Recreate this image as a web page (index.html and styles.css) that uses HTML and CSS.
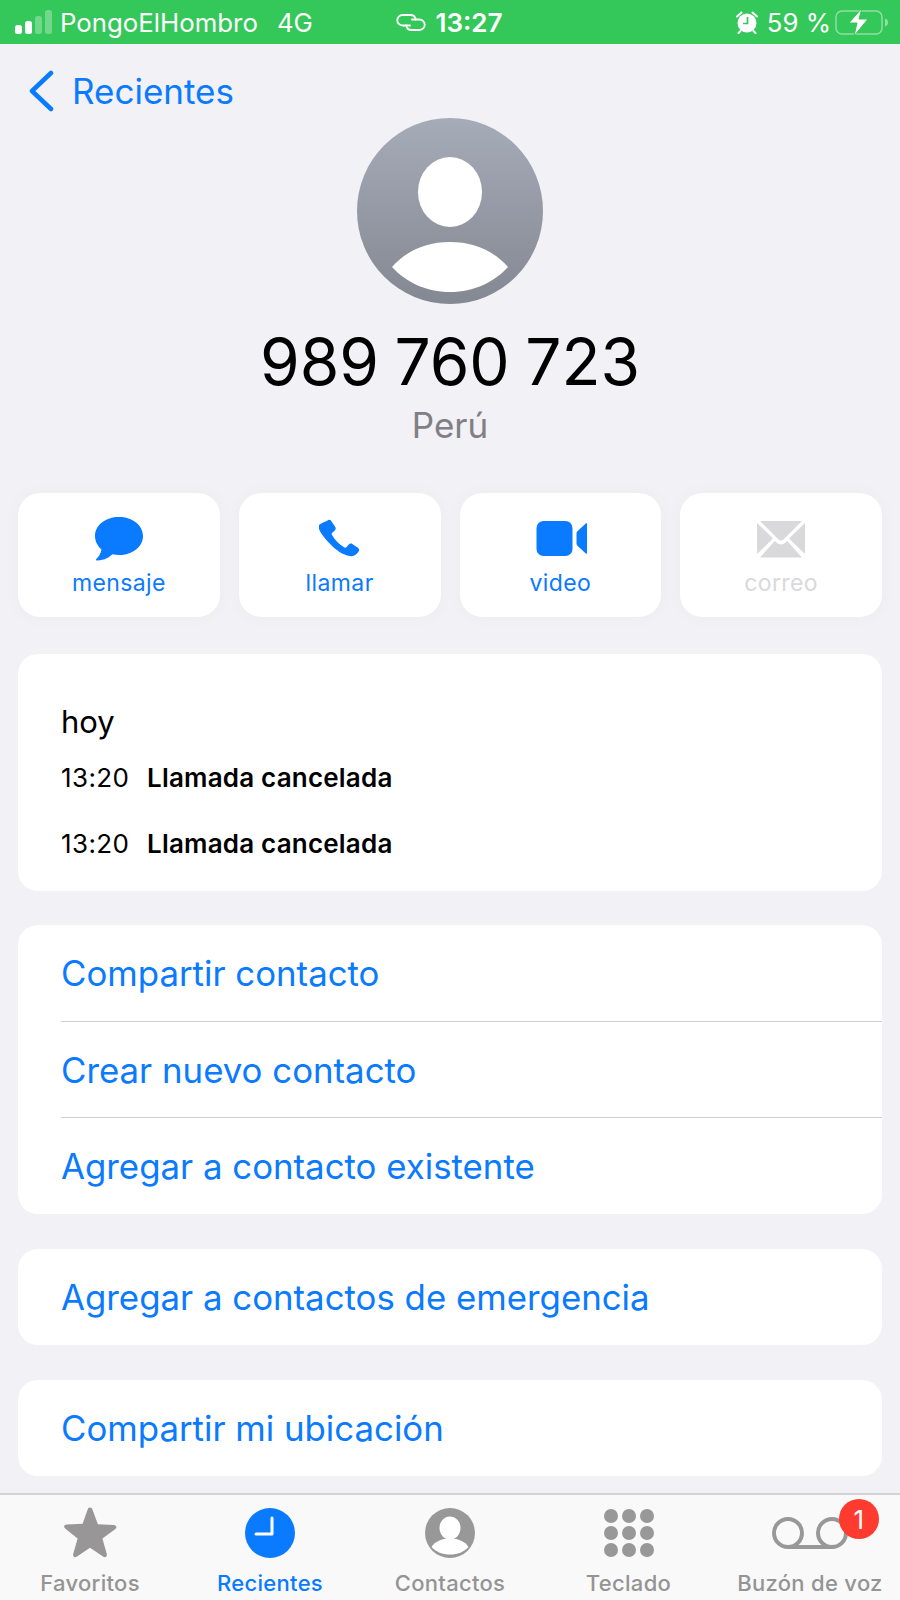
FILE: index.html
```html
<!DOCTYPE html>
<html lang="es">
<head>
  <meta charset="UTF-8">
  <meta name="viewport" content="width=device-width, initial-scale=1.0">
  <title>989 760 723</title>
  <link rel="stylesheet" href="styles.css">
</head>
<body>
  <div class="status-bar">
    <div class="status-left">
      <svg class="signal" width="38" height="24" viewBox="0 0 38 24">
        <rect x="0" y="15" width="7" height="9" rx="2.5" fill="#fff"/>
        <rect x="10" y="11" width="7" height="13" rx="2.5" fill="#fff"/>
        <rect x="20" y="6" width="7" height="18" rx="2.5" fill="#fff" opacity=".3"/>
        <rect x="30" y="0" width="7" height="24" rx="2.5" fill="#fff" opacity=".3"/>
      </svg>
      <span class="carrier">PongoElHombro</span>
      <span class="network">4G</span>
    </div>
    <div class="status-center">
      <svg width="30" height="17" viewBox="0 0 30 17" fill="none" stroke="#fff" stroke-width="1.8" stroke-linecap="round">
        <path d="M14 11.500H6.500a5.250 5.250 0 0 1 0-10.500h8a5.250 5.250 0 0 1 5.200 4.500"/>
        <path d="M16 5.500h7.500a5.250 5.250 0 0 1 0 10.500h-8a5.250 5.250 0 0 1-5.200-4.500"/>
      </svg>
      <span class="clock">13:27</span>
    </div>
    <div class="status-right">
      <svg width="22" height="24" viewBox="0 0 22 24">
        <circle cx="11" cy="13" r="9.500" fill="#fff"/>
        <path d="M1 6.500 5.500 2.500M21 6.500 16.500 2.500M4.500 21l-2 2M17.500 21l2 2" stroke="#fff" stroke-width="2" stroke-linecap="round"/>
        <path d="M11.500 7v6.500H7" fill="none" stroke="#34c759" stroke-width="1.700"/>
      </svg>
      <span class="battery-pct">59 %</span>
      <svg width="54" height="28" viewBox="0 0 54 28">
        <rect x="1" y="3" width="46" height="23" rx="6" fill="none" stroke="#fff" stroke-opacity=".45" stroke-width="1.500"/>
        <path d="M50 10.500c2 .5 3 2 3 4s-1 3.500-3 4z" fill="#fff" fill-opacity=".45"/>
        <path d="M27 0 14 15h8l-3 13 14-17h-9z" fill="#fff" stroke="#34c759" stroke-width="1"/>
      </svg>
    </div>
  </div>

  <nav class="back-bar">
    <svg width="26" height="42" viewBox="0 0 26 42" fill="none" stroke="#0a7aff" stroke-width="4.500" stroke-linecap="round" stroke-linejoin="round">
      <path d="M23 3 4 21l19 18"/>
    </svg>
    <span>Recientes</span>
  </nav>

  <section class="profile">
    <svg class="avatar" width="186" height="186" viewBox="0 0 186 186">
      <defs>
        <linearGradient id="avatarFill" x1="0" y1="0" x2="0" y2="1">
          <stop offset="0" stop-color="#a6abb8"/>
          <stop offset="1" stop-color="#848892"/>
        </linearGradient>
      </defs>
      <circle cx="93" cy="93" r="93" fill="url(#avatarFill)"/>
      <ellipse cx="93" cy="74" rx="32" ry="35" fill="#fff"/>
      <path d="M35 149C50 132 70 124 93 124s43 8 58 25c-14 15-34 25-58 25s-44-10-58-25z" fill="#fff"/>
    </svg>
    <h1 class="phone-number">989 760 723</h1>
    <p class="country">Perú</p>
  </section>

  <div class="actions">
    <a class="action">
      <svg width="50" height="46" viewBox="0 0 50 46">
        <path d="M25 1c13.500 0 24 8.200 24 19s-10.500 19-24 19c-2.300 0-4.500-.2-6.500-.7C15.500 41 11 44.500 3 44.500c-1 0-1.300-1-.7-1.600 2.700-2.500 4.500-5.400 5.200-9.400C3.700 30 1 25.300 1 20 1 9.200 11.500 1 25 1z" fill="#0a7aff"/>
      </svg>
      <span>mensaje</span>
    </a>
    <a class="action">
      <svg width="42" height="42" viewBox="2 0 44 44">
        <path d="M11 2.500c1.500-1 3-.6 4 .8l4 6c.9 1.400.6 2.800-.5 3.900l-2.800 2.400c-.6.600-.6 1.200-.2 2 1.500 2.700 3.400 5.200 5.700 7.500 2.300 2.300 4.700 4.200 7.400 5.700.8.400 1.400.4 2-.2l2.400-2.700c1.100-1.200 2.500-1.500 3.900-.6l5.800 3.900c1.400 1 1.800 2.500.8 4-1.700 2.600-4.300 4.800-7.500 4.800-5.500 0-13.500-3.800-20.800-11.100C7.900 21.600 1 13.200 1.500 8.500 1.800 6 8.500 4 11 2.500z" fill="#0a7aff"/>
      </svg>
      <span>llamar</span>
    </a>
    <a class="action">
      <svg width="54" height="36" viewBox="-3.500 0 54 36">
        <rect x="0" y="0" width="36" height="35" rx="7" fill="#0a7aff"/>
        <path d="M40 12.500c0-1 .4-1.700 1.200-2.400l7.800-7.400c1.300-1 3.300-.3 3.300 1.500v26.600c0 1.800-2 2.500-3.300 1.500l-7.800-7.400c-.8-.7-1.200-1.400-1.200-2.400z" fill="#0a7aff"/>
      </svg>
      <span>video</span>
    </a>
    <a class="action is-disabled">
      <svg width="48" height="38" viewBox="0 0 48 38">
        <path d="M3 1h42L26.500 19.500c-1.400 1.200-3.600 1.200-5 0z" fill="#d9d9db"/>
        <path d="M0 3v31l16-15.500zM48 3v31L32 18.500z" fill="#d9d9db"/>
        <path d="M3 37.500 17.800 21l2.200 2c2.300 1.900 5.700 1.900 8 0l2.200-2L45 37.500z" fill="#d9d9db"/>
      </svg>
      <span>correo</span>
    </a>
  </div>

  <section class="card history">
    <div class="history-day">hoy</div>
    <div class="history-row"><span class="history-time">13:20</span><strong>Llamada cancelada</strong></div>
    <div class="history-row"><span class="history-time">13:20</span><strong>Llamada cancelada</strong></div>
  </section>

  <ul class="card link-list first-list">
    <li>Compartir contacto</li>
    <li>Crear nuevo contacto</li>
    <li>Agregar a contacto existente</li>
  </ul>

  <ul class="card link-list">
    <li>Agregar a contactos de emergencia</li>
  </ul>

  <ul class="card link-list">
    <li>Compartir mi ubicación</li>
  </ul>

  <footer class="tab-bar">
    <a class="tab">
      <svg width="56" height="54" viewBox="0 0 56 54">
        <path d="M28 1.500c1.300 0 2 .8 2.500 2.200l5.400 14.500 15.700.7c3 .1 3.800 2.500 1.500 4.300L40.400 32.600l4.300 15.200c.8 2.800-1.300 4.300-3.700 2.700L28 41.800l-13 8.700c-2.400 1.600-4.500.1-3.700-2.700l4.300-15.200L3.400 22.700c-2.300-1.800-1.500-4.200 1.500-4.300l15.700-.7 5-14c.5-1.400 1.100-2.200 2.400-2.200z" fill="#989696"/>
      </svg>
      <span>Favoritos</span>
    </a>
    <a class="tab is-active">
      <svg width="54" height="54" viewBox="0 0 54 54">
        <circle cx="27" cy="27" r="25" fill="#0a7aff"/>
        <path d="M29 12v16H13" fill="none" stroke="#fff" stroke-width="3" stroke-linecap="round" stroke-linejoin="round"/>
      </svg>
      <span>Recientes</span>
    </a>
    <a class="tab">
      <svg width="54" height="54" viewBox="0 0 54 54">
        <circle cx="27" cy="27" r="25" fill="#989898"/>
        <ellipse cx="27" cy="22" rx="10.500" ry="11.500" fill="#fff"/>
        <path d="M8.500 41c3.500-5.500 10-8.500 18.500-8.500S42 35.500 45.500 41C41 46 34.500 48.500 27 48.500S13 46 8.500 41z" fill="#fff"/>
      </svg>
      <span>Contactos</span>
    </a>
    <a class="tab tab-keypad">
      <svg width="54" height="54" viewBox="0 0 54 54" fill="#989898">
        <circle cx="9" cy="10" r="7"/><circle cx="27" cy="10" r="7"/><circle cx="45" cy="10" r="7"/>
        <circle cx="9" cy="27" r="7"/><circle cx="27" cy="27" r="7"/><circle cx="45" cy="27" r="7"/>
        <circle cx="9" cy="44" r="7"/><circle cx="27" cy="44" r="7"/><circle cx="45" cy="44" r="7"/>
      </svg>
      <span>Teclado</span>
    </a>
    <a class="tab">
      <span class="tab-icon">
        <svg width="76" height="54" viewBox="0 0 76 54" fill="none" stroke="#989898" stroke-width="4">
          <circle cx="16" cy="27" r="14"/>
          <circle cx="60" cy="27" r="14"/>
          <path d="M16 41h44"/>
        </svg>
        <b class="badge">1</b>
      </span>
      <span>Buzón de voz</span>
    </a>
  </footer>
</body>
</html>
```

FILE: styles.css
```css
* {
  box-sizing: border-box;
}

body {
  margin: 0;
  width: 900px;
  height: 1600px;
  display: flex;
  flex-direction: column;
  overflow: hidden;
  background: #f1f1f6;
  color: #000;
  font-family: Inter, "Liberation Sans", sans-serif;
}

.status-bar {
  height: 44px;
  flex: none;
  display: flex;
  align-items: center;
  padding: 0 11px 0 15px;
  background: #34c759;
  color: #fff;
  font-size: 25.8px;
}

.status-left,
.status-right {
  flex: 1;
  display: flex;
  align-items: center;
}

.status-left .signal {
  margin-right: 7px;
}

.network {
  margin-left: 19px;
}

.status-center {
  display: flex;
  align-items: center;
  gap: 10px;
  margin-right: 6px;
}

.clock {
  font-size: 26px;
  font-weight: 600;
}

.status-right {
  justify-content: flex-end;
}

.battery-pct {
  margin: 0 4px 0 9px;
}

.back-bar {
  height: 48px;
  margin-top: 23px;
  padding-left: 28px;
  display: flex;
  align-items: center;
  gap: 18px;
  color: #0a7aff;
  font-size: 35px;
}

.profile {
  margin-top: 3px;
  text-align: center;
}

.avatar {
  display: block;
  margin: 0 auto;
}

.phone-number {
  margin: 19px 0 0;
  font-size: 64px;
  font-weight: 400;
  line-height: 78px;
  word-spacing: -2.5px;
}

.country {
  margin: 2px 0 0;
  color: #808084;
  font-size: 35px;
  line-height: 44px;
}

.actions {
  margin-top: 46px;
  padding: 0 18px;
  display: grid;
  grid-template-columns: repeat(4, 1fr);
  gap: 19px;
}

.action {
  height: 124px;
  padding-top: 23px;
  display: flex;
  flex-direction: column;
  align-items: center;
  background: #fff;
  border-radius: 22px;
  box-shadow: 0 0 18px rgba(0,0,0,0.03);
  color: #0a7aff;
  font-size: 23px;
  letter-spacing: 0.4px;
}

.action svg {
  height: 46px;
  flex: none;
}

.action span {
  margin-top: 7px;
}

.action.is-disabled {
  color: #d9d9db;
}

.card {
  margin: 35px 18px 0;
  background: #fff;
  border-radius: 20px;
}

.history {
  height: 237px;
  margin-top: 37px;
  padding: 48px 43px 0;
}

.history-day {
  margin-bottom: 2px;
  font-size: 31px;
  line-height: 40px;
}

.history-row {
  height: 66px;
  display: flex;
  align-items: center;
  font-size: 26px;
  letter-spacing: 0.2px;
}

.history-row strong {
  font-weight: 600;
}

.history-time {
  width: 86px;
  letter-spacing: 0.4px;
}

.link-list {
  padding: 0;
  list-style: none;
  overflow: hidden;
}

.link-list li {
  height: 96px;
  margin-left: 43px;
  display: flex;
  align-items: center;
  color: #0a7aff;
  font-size: 34.8px;
  border-top: 1px solid #d0d0d4;
}

.link-list li:first-child {
  border-top: 0;
}

.first-list {
  margin-top: 34px;
  padding-bottom: 1px;
}

.tab-bar {
  margin-top: auto;
  height: 107px;
  flex: none;
  display: grid;
  grid-template-columns: repeat(5, 1fr);
  background: #f9f9f9;
  border-top: 2px solid #d2d2d6;
}

.tab {
  display: flex;
  flex-direction: column;
  align-items: center;
  padding-top: 11px;
  color: #949494;
  font-size: 22px;
  font-weight: 500;
  letter-spacing: 0.3px;
}

.tab svg {
  display: block;
}

.tab > span:last-child {
  margin-top: 10px;
}

.tab.is-active {
  color: #0a7aff;
}

.tab-keypad {
  margin-left: -3px;
}

.tab-icon {
  position: relative;
  display: block;
}

.badge {
  position: absolute;
  top: -7px;
  left: 67px;
  width: 40px;
  height: 40px;
  display: flex;
  align-items: center;
  justify-content: center;
  border-radius: 50%;
  background: #ff3b30;
  color: #fff;
  font-size: 26px;
  font-weight: 400;
}
```
